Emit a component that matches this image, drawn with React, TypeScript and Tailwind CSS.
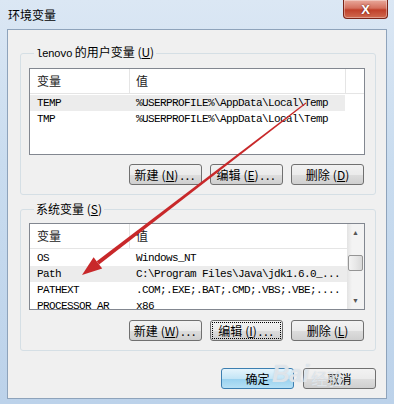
import type { ReactNode } from "react";

const cjk = "font-['Noto_Sans_CJK_SC',sans-serif]";
const mono = "font-['Liberation_Mono','Noto_Sans_CJK_SC',monospace] text-[11px] tracking-[-0.6px]";

// Win7 style push button
const Btn = ({
  label,
  hot,
  tail = "",
  def = false,
  focus = false,
}: {
  label: string;
  hot?: string;
  tail?: string;
  def?: boolean;
  focus?: boolean;
}) => (
  <button
    className={`h-[21px] w-[73px] rounded-[3px] border p-[2px] text-[12px] leading-none text-black ${cjk} ${
      def
        ? "border-[#3c7fb1] bg-[linear-gradient(#e5f4fc_0%,#c4e5f6_50%,#98d1ef_51%,#b6e0f5_100%)]"
        : "border-[#707070] bg-[linear-gradient(#f2f2f2_0%,#ebebeb_50%,#dddddd_51%,#cfcfcf_100%)]"
    }`}
  >
    <span
      className={`flex h-full w-full items-center justify-center ${
        focus ? "outline-1 outline-dotted outline-black" : ""
      }`}
    >
      {label}
      {hot && (
        <span className="ml-[3px]">
          (<span className="underline">{hot}</span>)
        </span>
      )}
      {tail && <span className="ml-[2px] tracking-[2px]">{tail}</span>}
    </span>
  </button>
);

const Header = ({ scroll = false }: { scroll?: boolean }) => (
  <div className="flex h-[25px] shrink-0 border-b border-[#e5e5e5] bg-white text-[12px] text-[#222]">
    <div className={`flex w-[100px] items-center border-r border-[#e5e5e5] pl-[7px] ${cjk}`}>变量</div>
    <div className={`flex flex-1 items-center pl-[6px] ${cjk}`}>值</div>
    {!scroll && <div className="w-[19px] border-l border-[#e5e5e5]" />}
  </div>
);

const Row = ({ name, value, sel = false }: { name: string; value: string; sel?: boolean }) => (
  <div className={`flex h-[16px] items-center leading-[16px] text-black ${mono} ${sel ? "bg-[#ececec]" : ""}`}>
    <div className="w-[100px] shrink-0 overflow-hidden whitespace-nowrap pl-[7px]">{name}</div>
    <div className="flex-1 overflow-hidden whitespace-nowrap pl-[6px]">{value}</div>
  </div>
);

const Group = ({ legend, children }: { legend: ReactNode; children: ReactNode }) => (
  <fieldset className="ml-[12px] mr-[10px] rounded-[3px] border border-[#d5dfe5] pb-[9px] pl-[8px] pr-[10px]">
    <legend className={`ml-[5px] px-[2px] text-[12px] leading-[14px] text-black ${cjk}`}>{legend}</legend>
    {children}
  </fieldset>
);

const ScrollBar = () => (
  <div className="flex w-[17px] shrink-0 flex-col bg-[linear-gradient(90deg,#e3e3e3,#f3f3f3_30%,#f3f3f3)]">
    <div className="flex h-[17px] items-center justify-center text-[7px] leading-none text-[#555]">▲</div>
    <div className="flex-1 px-[1px] pt-[14px]">
      <div className="h-[16px] rounded-[2px] border border-[#959595] bg-[linear-gradient(90deg,#f3f3f3,#e8e8e8_50%,#d9d9d9)]" />
    </div>
    <div className="flex h-[17px] items-center justify-center text-[7px] leading-none text-[#555]">▼</div>
  </div>
);

export default function App() {
  return (
    <div className="relative h-[406px] w-[394px] overflow-hidden bg-white">
      <div className="flex h-[404px] w-[394px] flex-col bg-[linear-gradient(#dbe7f4,#c9dcef_40%,#bcd2ea)] px-[7px]">
        {/* title bar */}
        <div className="flex h-[29px] shrink-0 justify-between">
          <div className={`flex items-center pl-[1px] pt-[1px] text-[12px] text-black ${cjk}`}>环境变量</div>
          <div className="-mr-[1px] flex h-[19px] w-[45px] items-center justify-center rounded-b-[4px] border border-t-0 border-[#7a2418] bg-[linear-gradient(#e9a99b,#d4705e_45%,#c0402a_55%,#d06a50)] shadow-[inset_0_0_0_1px_rgba(255,255,255,0.35)]">
            <span className="text-[13px] font-bold leading-none text-white [text-shadow:0_0_2px_#5a1408] font-['Liberation_Sans',sans-serif]">X</span>
          </div>
        </div>

        {/* client area */}
        <div className="flex h-[370px] shrink-0 flex-col border border-[#8ea3bb] bg-[#f0f0f0]">
          <div className="mt-[15px]">
            <Group
              legend={
                <>
                  <span className={mono}>lenovo</span> 的用户变量 (<span className="underline">U</span>)
                </>
              }
            >
              <div className="mt-[7px] flex h-[87px] flex-col border border-[#828790] bg-white">
                <Header />
                <div className="pt-[1px]">
                  <div className="mr-[19px]">
                    <Row name="TEMP" value="%USERPROFILE%\AppData\Local\Temp" sel />
                    <Row name="TMP" value="%USERPROFILE%\AppData\Local\Temp" />
                  </div>
                </div>
              </div>
              <div className="mt-[9px] flex justify-end gap-[8px] pr-[1px]">
                <Btn label="新建" hot="N" tail="..." />
                <Btn label="编辑" hot="E" tail="..." />
                <Btn label="删除" hot="D" />
              </div>
            </Group>
          </div>

          <div className="mt-[7px]">
            <Group
              legend={
                <>
                  系统变量 (<span className="underline">S</span>)
                </>
              }
            >
              <div className="mt-[7px] flex h-[87px] border border-[#828790] bg-white">
                <div className="flex min-w-0 flex-1 flex-col overflow-hidden">
                  <Header scroll />
                  <div className="pt-[1px]">
                    <Row name="OS" value="Windows_NT" />
                    <Row name="Path" value="C:\Program Files\Java\jdk1.6.0_..." sel />
                    <Row name="PATHEXT" value=".COM;.EXE;.BAT;.CMD;.VBS;.VBE;...." />
                    <Row name="PROCESSOR_AR" value="x86" />
                  </div>
                </div>
                <ScrollBar />
              </div>
              <div className="mt-[10px] flex justify-end gap-[8px] pr-[1px]">
                <Btn label="新建" hot="W" tail="..." />
                <Btn label="编辑" hot="I" tail="..." focus />
                <Btn label="删除" hot="L" />
              </div>
            </Group>
          </div>

          <div className="mt-[17px] flex justify-end gap-[9px] pr-[10px]">
            <Btn label="确定" def />
            <Btn label="取消" />
          </div>
        </div>
      </div>

      {/* watermark */}
      <div className="pointer-events-none absolute left-[272px] top-[362px] flex items-end text-white/50 [text-shadow:0_0_1px_#bcc8d4]">
        <span className="text-[24px] font-bold italic leading-none font-['Liberation_Sans',sans-serif]">Bai</span>
        <span className={`ml-[2px] text-[16px] leading-none ${cjk}`}>经验</span>
      </div>

      {/* red arrow */}
      <svg className="pointer-events-none absolute left-0 top-0" width="394" height="406" viewBox="0 0 394 406">
        <polygon points="306.3,103.4 305.7,102.6 96.7,261.2 99.1,264.4" fill="#c8282a" />
        <polygon points="82,275 102.2,268.4 93.6,257.3" fill="#c8282a" />
      </svg>
    </div>
  );
}
